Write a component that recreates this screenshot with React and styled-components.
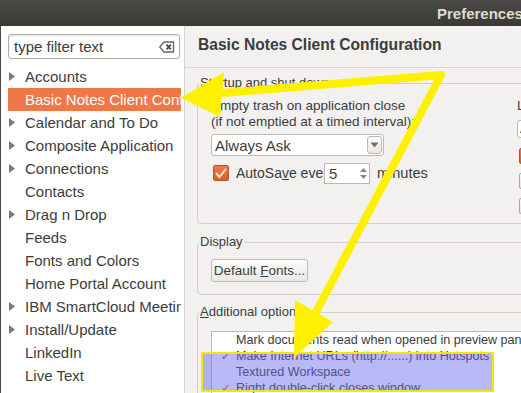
import React from 'react';
import styled, { createGlobalStyle } from 'styled-components';

const GlobalStyle = createGlobalStyle`
  html, body {
    margin: 0;
    padding: 0;
    background: #f2f1f0;
  }
  * {
    box-sizing: border-box;
  }
`;

const Window = styled.div`
  position: relative;
  width: 521px;
  height: 393px;
  overflow: hidden;
  display: flex;
  flex-direction: column;
  font-family: 'Liberation Sans', Arial, sans-serif;
  color: #3c3c3c;
  background: #f2f1f0;
`;

const TitleBar = styled.div`
  height: 26px;
  flex-shrink: 0;
  display: flex;
  align-items: center;
  padding-left: 437px;
  background: linear-gradient(#4a4945, #3a3935);
  color: #dfdbd2;
  font-weight: bold;
  font-size: 15px;
  white-space: nowrap;
`;

const Body = styled.div`
  flex: 1;
  display: flex;
  min-height: 0;
  border-left: 1px solid #4a4945;
`;

const Sidebar = styled.div`
  width: 184px;
  flex-shrink: 0;
  background: #ffffff;
  border-right: 1px solid #d6d3ce;
  padding: 8px 2px 0 7px;
  overflow: hidden;
`;

const Filter = styled.div`
  height: 25px;
  width: 172px;
  display: flex;
  align-items: center;
  justify-content: space-between;
  padding: 0 4px 0 5px;
  border: 1px solid #b2aea7;
  border-radius: 3px;
  box-shadow: inset 0 1px 2px rgba(0, 0, 0, 0.12);
  font-size: 15px;
  color: #3c3c3c;
`;

const Tree = styled.ul`
  list-style: none;
  margin: 6px 0 0;
  padding: 0;
`;

const TreeRow = styled.li`
  height: 23px;
  width: 173px;
  display: flex;
  align-items: center;
  font-size: 15px;
  white-space: nowrap;
  overflow: hidden;
  background: ${(p) => (p.$selected ? '#f07746' : 'transparent')};
  color: ${(p) => (p.$selected ? '#ffffff' : '#3c3c3c')};
`;

const Expander = styled.span`
  width: 17px;
  flex-shrink: 0;
  display: flex;
  align-items: center;
  padding-left: 1px;
`;

const Main = styled.div`
  flex: 1;
  min-width: 0;
  overflow: hidden;
`;

const Header = styled.div`
  height: 42px;
  display: flex;
  align-items: center;
  padding: 0 0 4px 13px;
  border-bottom: 1px solid #d8d5d0;
  font-size: 15.6px;
  font-weight: bold;
  white-space: nowrap;
`;

const Content = styled.div`
  padding: 8px 0 0 12px;
  width: 520px;
`;

const Group = styled.fieldset`
  margin: 0 0 ${(p) => p.$gap || 0}px;
  padding: 0;
  border: 1px solid #d3cfc9;
  border-radius: 4px;
  height: ${(p) => p.$height}px;
`;

const Legend = styled.legend`
  margin-left: 1px;
  padding: 0 1px;
  font-size: 13px;
  line-height: 14px;
`;

const Columns = styled.div`
  display: flex;
  padding: 8px 0 0 13px;
`;

const Column = styled.div`
  width: ${(p) => p.$width}px;
  flex-shrink: 0;
  font-size: 13.5px;
`;

const Label = styled.div`
  line-height: 16px;
  white-space: nowrap;
`;

const Combo = styled.div`
  margin-top: 4px;
  width: 173px;
  height: 22px;
  display: flex;
  align-items: center;
  justify-content: space-between;
  padding: 0 1px 0 3px;
  background: #ffffff;
  border: 1px solid #bdb9b2;
  border-radius: 3px;
  font-size: 15px;
`;

const ComboButton = styled.span`
  width: 15px;
  height: 18px;
  display: flex;
  align-items: center;
  justify-content: center;
  border: 1px solid #bdb9b2;
  border-radius: 3px;
  background: linear-gradient(#fbfbfa, #e9e7e4);
`;

const CheckRow = styled.div`
  margin-top: 6px;
  display: flex;
  align-items: center;
  height: 22px;
  font-size: 14px;
`;

const CheckBox = styled.span`
  width: 16px;
  height: 16px;
  margin-left: 2px;
  flex-shrink: 0;
  border-radius: 2px;
  display: flex;
  align-items: center;
  justify-content: center;
  background: ${(p) => (p.$checked ? 'linear-gradient(#f07a4a, #dd5c2c)' : 'linear-gradient(#fafafa, #e6e4e1)')};
  border: 1px solid ${(p) => (p.$checked ? '#b7512a' : '#aaa6a0')};
`;

const ClipLabel = styled.span`
  width: 88px;
  margin-left: 7px;
  overflow: hidden;
  white-space: nowrap;
`;

const Spin = styled.div`
  width: 46px;
  height: 21px;
  display: flex;
  align-items: center;
  justify-content: space-between;
  padding: 0 2px 0 4px;
  background: #ffffff;
  border: 1px solid #bdb9b2;
  font-size: 15px;
`;

const SpinArrows = styled.span`
  display: flex;
  flex-direction: column;
  gap: 3px;
  padding: 1px 0 0;
`;

const Suffix = styled.span`
  margin-left: 7px;
  font-size: 14.5px;
`;

const SideCombo = styled.div`
  margin-top: 6px;
  height: 18px;
  width: 80px;
  border: 1px solid #bdb9b2;
  border-radius: 3px;
  background: #ffffff;
  font-size: 13px;
  padding-left: 2px;
  color: #3c3c3c;
`;

const SideChecks = styled.div`
  margin-top: 10px;
  display: flex;
  flex-direction: column;
  gap: 9px;
`;

const Button = styled.div`
  margin: 10px 0 0 13px;
  width: 97px;
  height: 23px;
  display: flex;
  align-items: center;
  justify-content: center;
  font-size: 13.5px;
  border: 1px solid #bdb9b2;
  border-radius: 3px;
  background: linear-gradient(#fbfbfa, #ebe9e6);
`;

const ListBox = styled.div`
  margin: 12px 0 0 13px;
  height: 70px;
  background: #ffffff;
  border: 1px solid #bdb9b2;
`;

const ListItem = styled.div`
  height: 16px;
  display: flex;
  align-items: center;
  font-size: 12.6px;
  white-space: nowrap;
`;

const Tick = styled.span`
  width: 24px;
  padding-left: 9px;
  font-size: 11px;
  flex-shrink: 0;
  color: #555;
`;

const Overlay = styled.svg`
  position: absolute;
  left: 0;
  top: 0;
  pointer-events: none;
`;

const treeItems = [
  { name: 'Accounts', kids: true },
  { name: 'Basic Notes Client Configuration', selected: true },
  { name: 'Calendar and To Do', kids: true },
  { name: 'Composite Application', kids: true },
  { name: 'Connections', kids: true },
  { name: 'Contacts' },
  { name: 'Drag n Drop', kids: true },
  { name: 'Feeds' },
  { name: 'Fonts and Colors' },
  { name: 'Home Portal Account' },
  { name: 'IBM SmartCloud Meetings', kids: true },
  { name: 'Install/Update', kids: true },
  { name: 'LinkedIn' },
  { name: 'Live Text' },
];

const options = [
  { text: 'Mark documents read when opened in preview pane' },
  { text: 'Make Internet URLs (http://......) into Hotspots', checked: true },
  { text: 'Textured Workspace' },
  { text: 'Right double-click closes window', checked: true },
];

const ClearIcon = () => (
  <svg width="16" height="12" viewBox="0 0 16 12">
    <path d="M5 1 H14.5 V11 H5 L0.8 6 Z" fill="none" stroke="#6b6b6b" strokeWidth="1.4" strokeLinejoin="round" />
    <path d="M7.6 3.6 L11.8 8.4 M11.8 3.6 L7.6 8.4" stroke="#4a4a4a" strokeWidth="1.8" />
  </svg>
);

const Arrow = () => (
  <svg width="6" height="9" viewBox="0 0 6 9">
    <path d="M0 0 L6 4.5 L0 9 Z" fill="#7a7a7a" />
  </svg>
);

const DownTri = () => (
  <svg width="9" height="6" viewBox="0 0 9 6">
    <path d="M0.5 0.5 H8.5 L4.5 5.5 Z" fill="#6e6e6e" />
  </svg>
);

const CheckMark = () => (
  <svg width="12" height="11" viewBox="0 0 12 11">
    <path d="M1.5 5.5 L4.5 9 L10.5 1.5" fill="none" stroke="#fbe6dc" strokeWidth="2" strokeLinecap="round" />
  </svg>
);

const SpinTri = ({ up }) => (
  <svg width="7" height="4" viewBox="0 0 7 4">
    <path d={up ? 'M0 4 L3.5 0 L7 4 Z' : 'M0 0 L7 0 L3.5 4 Z'} fill="#8a8a8a" />
  </svg>
);

const Annotations = () => (
  <Overlay width="521" height="393" viewBox="0 0 521 393">
    <rect x="202" y="353" width="291" height="38" fill="rgba(100,100,240,0.45)" stroke="#f7e600" strokeWidth="2" />
    <path d="M222 93 L441 75 L316 312" fill="none" stroke="#fff000" strokeWidth="8" strokeLinejoin="round" strokeLinecap="round" />
    <polygon points="181,98 224,72 220,117" fill="#fff000" />
    <polygon points="294,358 295,300 333,322" fill="#fff000" />
  </Overlay>
);

const App = () => (
  <>
    <GlobalStyle />
    <Window>
      <TitleBar>Preferences</TitleBar>
      <Body>
        <Sidebar>
          <Filter>
            <span>type filter text</span>
            <ClearIcon />
          </Filter>
          <Tree>
            {treeItems.map((item) => (
              <TreeRow key={item.name} $selected={item.selected}>
                <Expander>{item.kids && <Arrow />}</Expander>
                {item.name}
              </TreeRow>
            ))}
          </Tree>
        </Sidebar>
        <Main>
          <Header>Basic Notes Client Configuration</Header>
          <Content>
            <Group $height={148} $gap={11}>
              <Legend>Startup and shut down</Legend>
              <Columns>
                <Column $width={306}>
                  <Label><u>E</u>mpty trash on application close</Label>
                  <Label>(if not emptied at a timed interval):</Label>
                  <Combo>
                    <span>Always Ask</span>
                    <ComboButton><DownTri /></ComboButton>
                  </Combo>
                  <CheckRow>
                    <CheckBox $checked><CheckMark /></CheckBox>
                    <ClipLabel>AutoSa<u>v</u>e every</ClipLabel>
                    <Spin>
                      <span>5</span>
                      <SpinArrows>
                        <SpinTri up />
                        <SpinTri />
                      </SpinArrows>
                    </Spin>
                    <Suffix>minutes</Suffix>
                  </CheckRow>
                </Column>
                <Column $width={120}>
                  <Label>Location</Label>
                  <SideCombo>All</SideCombo>
                  <SideChecks>
                    <CheckBox $checked />
                    <CheckBox />
                    <CheckBox />
                  </SideChecks>
                </Column>
              </Columns>
            </Group>
            <Group $height={60} $gap={10}>
              <Legend>Display</Legend>
              <Button><span>Default <u>F</u>onts...</span></Button>
            </Group>
            <Group $height={120}>
              <Legend><u>A</u>dditional options</Legend>
              <ListBox>
                {options.map((o) => (
                  <ListItem key={o.text}>
                    <Tick>{o.checked ? '✓' : ''}</Tick>
                    {o.text}
                  </ListItem>
                ))}
              </ListBox>
            </Group>
          </Content>
        </Main>
      </Body>
      <Annotations />
    </Window>
  </>
);

export default App;
